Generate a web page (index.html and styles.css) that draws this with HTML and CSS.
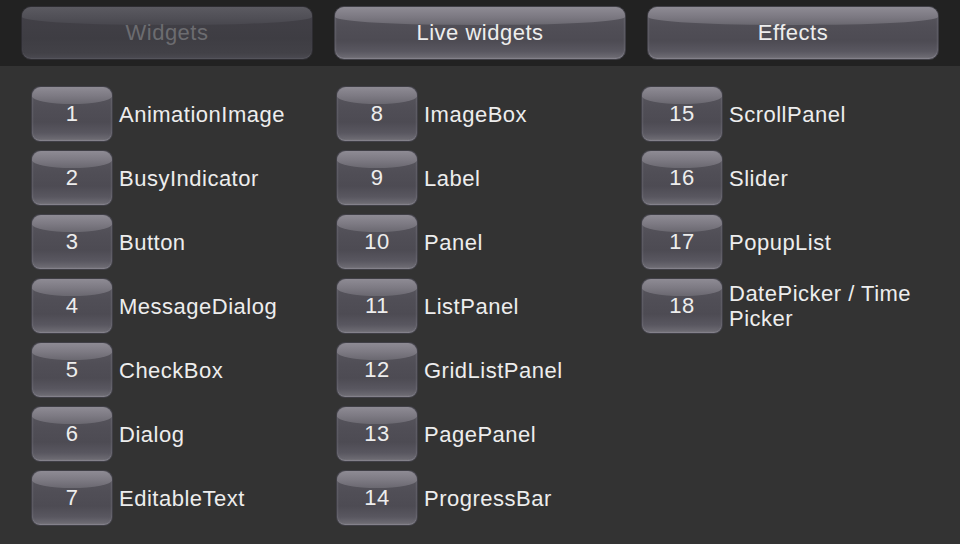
FILE: index.html
```html
<!DOCTYPE html>
<html>
<head>
<meta charset="utf-8">
<link rel="stylesheet" href="styles.css">
</head>
<body>
<div class="topbar">
  <div class="tab disabled"><span>Widgets</span></div>
  <div class="tab"><span>Live widgets</span></div>
  <div class="tab"><span>Effects</span></div>
</div>
<div class="main">
  <div class="grid">
    <div class="item"><div class="btn"><span>1</span></div><div class="label">AnimationImage</div></div>
    <div class="item"><div class="btn"><span>2</span></div><div class="label">BusyIndicator</div></div>
    <div class="item"><div class="btn"><span>3</span></div><div class="label">Button</div></div>
    <div class="item"><div class="btn"><span>4</span></div><div class="label">MessageDialog</div></div>
    <div class="item"><div class="btn"><span>5</span></div><div class="label">CheckBox</div></div>
    <div class="item"><div class="btn"><span>6</span></div><div class="label">Dialog</div></div>
    <div class="item"><div class="btn"><span>7</span></div><div class="label">EditableText</div></div>
    <div class="item"><div class="btn"><span>8</span></div><div class="label">ImageBox</div></div>
    <div class="item"><div class="btn"><span>9</span></div><div class="label">Label</div></div>
    <div class="item"><div class="btn"><span>10</span></div><div class="label">Panel</div></div>
    <div class="item"><div class="btn"><span>11</span></div><div class="label">ListPanel</div></div>
    <div class="item"><div class="btn"><span>12</span></div><div class="label">GridListPanel</div></div>
    <div class="item"><div class="btn"><span>13</span></div><div class="label">PagePanel</div></div>
    <div class="item"><div class="btn"><span>14</span></div><div class="label">ProgressBar</div></div>
    <div class="item"><div class="btn"><span>15</span></div><div class="label">ScrollPanel</div></div>
    <div class="item"><div class="btn"><span>16</span></div><div class="label">Slider</div></div>
    <div class="item"><div class="btn"><span>17</span></div><div class="label">PopupList</div></div>
    <div class="item"><div class="btn"><span>18</span></div><div class="label">DatePicker / Time Picker</div></div>
  </div>
</div>
</body>
</html>
```
FILE: styles.css
```css
html, body {
  margin: 0;
  padding: 0;
  width: 960px;
  height: 544px;
  overflow: hidden;
  background: #333333;
  font-family: "Liberation Sans", Arial, sans-serif;
  color: #ededed;
}
.topbar {
  height: 66px;
  background: #222222;
  box-sizing: border-box;
  padding: 6px 21px 0 21px;
  display: flex;
  gap: 21px;
}
.tab, .btn {
  position: relative;
  box-sizing: border-box;
  display: flex;
  align-items: center;
  justify-content: center;
  border: 1px solid #403f46;
  background: linear-gradient(to bottom, #5a5860 0%, #504e56 40%, #4d4b53 65%, #595760 85%, #6b6971 96%, #7a7880 100%);
  box-shadow: inset 0 -1px 1px rgba(160,158,168,0.35), inset 1px 0 2px rgba(130,128,138,0.35), inset -1px 0 2px rgba(130,128,138,0.35);
  letter-spacing: 0.5px;
}
.tab::before, .btn::before {
  content: "";
  position: absolute;
  left: 0;
  right: 0;
  top: 0;
  border-radius: 9px 9px 50% 50% / 9px 9px 45% 45%;
  background: linear-gradient(to bottom, #8e8b94 0%, #7c7982 55%, #6a6870 100%);
}
.tab span, .btn span {
  position: relative;
}
.tab {
  width: 292px;
  height: 54px;
  border-radius: 10px;
  font-size: 22px;
}
.tab::before {
  height: 18px;
}
.tab.disabled {
  color: #6c6c70;
  border-color: #2e2d32;
  background: linear-gradient(to bottom, #434148 0%, #3e3d43 60%, #424147 88%, #4b4a51 100%);
  box-shadow: inset 0 -1px 1px rgba(110,108,116,0.35);
}
.tab.disabled::before {
  background: linear-gradient(to bottom, #5b5a61 0%, #504f56 60%, #48474e 100%);
}
.main {
  padding: 20px 0 0 31px;
}
.grid {
  display: grid;
  grid-auto-flow: column;
  grid-template-columns: repeat(3, 305px);
  grid-template-rows: repeat(7, 56px);
  row-gap: 8px;
}
.item {
  display: flex;
  align-items: center;
}
.btn {
  flex: 0 0 82px;
  width: 82px;
  height: 56px;
  border-radius: 9px;
  font-size: 22px;
}
.btn::before {
  height: 17px;
}
.label {
  margin-left: 6px;
  font-size: 22px;
  line-height: 25px;
  letter-spacing: 0.5px;
  width: 205px;
}
```
